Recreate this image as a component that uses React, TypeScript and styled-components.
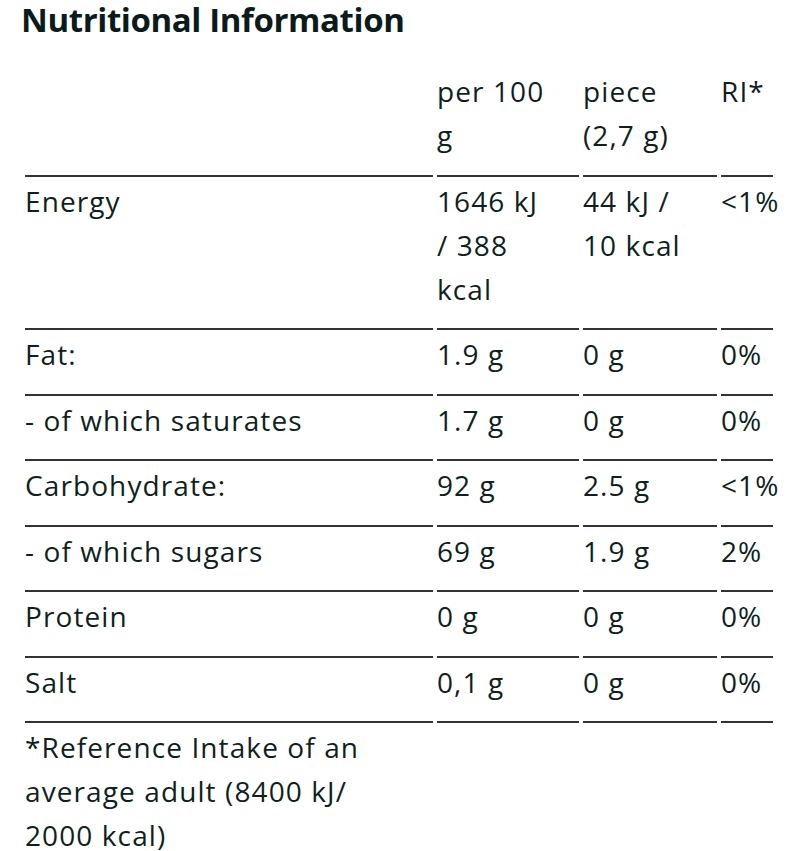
import React from 'react';
import styled, { createGlobalStyle } from 'styled-components';

const GlobalStyle = createGlobalStyle`
  body {
    margin: 0;
    background: #fff;
    font-family: 'Open Sans', 'Liberation Sans', sans-serif;
    color: #0f1f1e;
  }
`;

const Page = styled.div`
  padding: 0 23px 0 21px;
`;

const Title = styled.h2`
  margin: 0 0 27px;
  font-size: 33px;
  line-height: 40px;
  font-weight: 700;
  letter-spacing: -0.4px;
  color: #0b1b1b;
`;

const Table = styled.table`
  width: 756px;
  table-layout: fixed;
  border-collapse: separate;
  border-spacing: 4px 0;
  font-size: 28px;
  line-height: 44px;
  letter-spacing: 1.1px;
`;

interface CellProps {
  $last?: boolean;
  $plain?: boolean;
}

const Cell = styled.td<CellProps>`
  padding: 2px ${props => (props.$last ? '0' : '28px')} 17.5px 0;
  vertical-align: top;
  text-align: left;
  font-weight: 400;
  white-space: ${props => (props.$last ? 'nowrap' : 'normal')};
  border-bottom: ${props => (props.$plain ? 'none' : '2px solid #333')};
`;

const HeadCell = styled(Cell).attrs({ as: 'th' })``;

interface Row {
  label: string;
  per100: string;
  piece: string;
  ri: string;
}

const rows: Row[] = [
  { label: 'Energy', per100: '1646 kJ / 388 kcal', piece: '44 kJ / 10 kcal', ri: '<1%' },
  { label: 'Fat:', per100: '1.9 g', piece: '0 g', ri: '0%' },
  { label: '- of which saturates', per100: '1.7 g', piece: '0 g', ri: '0%' },
  { label: 'Carbohydrate:', per100: '92 g', piece: '2.5 g', ri: '<1%' },
  { label: '- of which sugars', per100: '69 g', piece: '1.9 g', ri: '2%' },
  { label: 'Protein', per100: '0 g', piece: '0 g', ri: '0%' },
  { label: 'Salt', per100: '0,1 g', piece: '0 g', ri: '0%' }
];

const App = () => (
  <Page>
    <GlobalStyle />
    <Title>Nutritional Information</Title>
    <Table>
      <colgroup>
        <col style={{ width: 408 }} />
        <col style={{ width: 142 }} />
        <col style={{ width: 134 }} />
        <col style={{ width: 52 }} />
      </colgroup>
      <thead>
        <tr>
          <HeadCell />
          <HeadCell>per 100 g</HeadCell>
          <HeadCell>piece (2,7 g)</HeadCell>
          <HeadCell $last>RI*</HeadCell>
        </tr>
      </thead>
      <tbody>
        {rows.map(row => (
          <tr key={row.label}>
            <Cell>{row.label}</Cell>
            <Cell>{row.per100}</Cell>
            <Cell>{row.piece}</Cell>
            <Cell $last>{row.ri}</Cell>
          </tr>
        ))}
        <tr>
          <Cell $plain>*Reference Intake of an average adult (8400 kJ/ 2000 kcal)</Cell>
          <Cell $plain />
          <Cell $plain />
          <Cell $plain $last />
        </tr>
      </tbody>
    </Table>
  </Page>
);

export default App;
